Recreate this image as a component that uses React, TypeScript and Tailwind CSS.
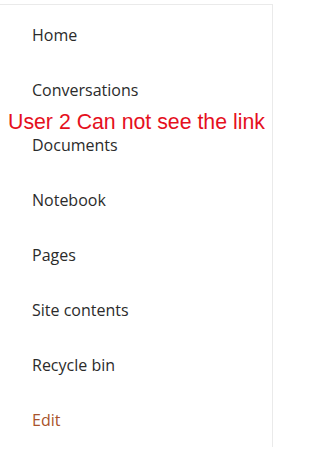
const items = ["Home", "Conversations", "Documents", "Notebook", "Pages", "Site contents", "Recycle bin"];

export default function App() {
  return (
    <div className="relative h-[450px] w-[274px] overflow-hidden bg-white" style={{ fontFamily: '"Open Sans", "Noto Sans", sans-serif' }}>
      <div className="mt-[4px] w-[273px] border-t border-r border-[#eaeaea] pt-[2px]">
        <nav className="flex flex-col">
          {items.map((label) => (
            <a key={label} className="flex h-[55px] items-center pl-[32px] text-[16px] text-[#2b2b2b]">
              {label}
            </a>
          ))}
          <a className="flex h-[55px] items-center pl-[32px] text-[16px] text-[#a9522b]">Edit</a>
        </nav>
      </div>
      {/* annotation over the nav */}
      <div
        className="absolute left-[8px] top-[107px] text-[21.3px] leading-[30px] text-[#e5101d]"
        style={{ fontFamily: '"Liberation Sans", Arial, sans-serif' }}
      >
        User 2 Can not see the link
      </div>
    </div>
  );
}
